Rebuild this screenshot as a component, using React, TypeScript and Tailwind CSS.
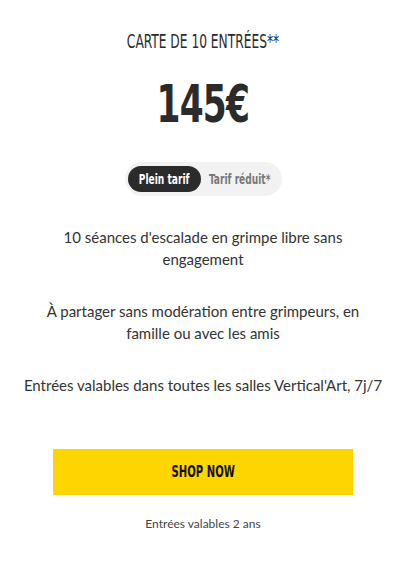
import { useState } from "react";

const cond = "font-['DejaVu_Sans_Condensed',sans-serif]";

function TarifButton({
  active,
  onClick,
  children,
}: {
  active: boolean;
  onClick: () => void;
  children: React.ReactNode;
}) {
  return (
    <button
      onClick={onClick}
      className={`flex h-[26px] items-center justify-center rounded-full ${
        active ? "w-[73px] bg-[#2b2b2b] text-white" : "w-[78px] text-[#777]"
      }`}
    >
      <span
        className={`${cond} inline-block scale-x-[0.72] whitespace-nowrap text-[14px] font-bold`}
      >
        {children}
      </span>
    </button>
  );
}

export default function App() {
  const [tarif, setTarif] = useState<"plein" | "reduit">("plein");

  return (
    <div className="flex min-h-[581px] w-[406px] flex-col items-center bg-white pt-[30px] font-['Lato',sans-serif] text-[#333]">
      <h2 className="flex h-[22px] items-center">
        <span
          className={`${cond} inline-block scale-x-[0.68] whitespace-nowrap text-[20px] uppercase text-[#2b2b2b]`}
        >
          Carte de 10 entrées**
        </span>
      </h2>

      <p className="mt-[28px] flex h-[50px] items-center">
        <span
          className={`${cond} inline-block scale-x-[0.75] whitespace-nowrap text-[51px] font-bold tracking-[-1px] text-[#2b2b2b]`}
        >
          145€
        </span>
      </p>

      <div className="mt-[32px] flex h-[34px] items-center rounded-full bg-[#f2f2f2] px-[3px]">
        <TarifButton active={tarif === "plein"} onClick={() => setTarif("plein")}>
          Plein tarif
        </TarifButton>
        <TarifButton active={tarif === "reduit"} onClick={() => setTarif("reduit")}>
          Tarif réduit*
        </TarifButton>
      </div>

      <div className="mt-[30px] flex w-full flex-col gap-[30px] px-[20px] text-center text-[15px] leading-[22px]">
        <p className="mx-auto w-[310px]">
          10 séances d'escalade en grimpe libre sans engagement
        </p>
        <p className="mx-auto w-[330px]">
          À partager sans modération entre grimpeurs, en famille ou avec les
          amis
        </p>
        <p>Entrées valables dans toutes les salles Vertical'Art, 7j/7</p>
      </div>

      <button className="mt-[53px] flex h-[46px] w-[300px] items-center justify-center bg-[#ffd500]">
        <span
          className={`${cond} inline-block scale-x-[0.7] whitespace-nowrap text-[16px] font-bold uppercase text-[#111]`}
        >
          Shop now
        </span>
      </button>

      <p className="mt-[20px] text-[12px] text-[#444]">Entrées valables 2 ans</p>
    </div>
  );
}
